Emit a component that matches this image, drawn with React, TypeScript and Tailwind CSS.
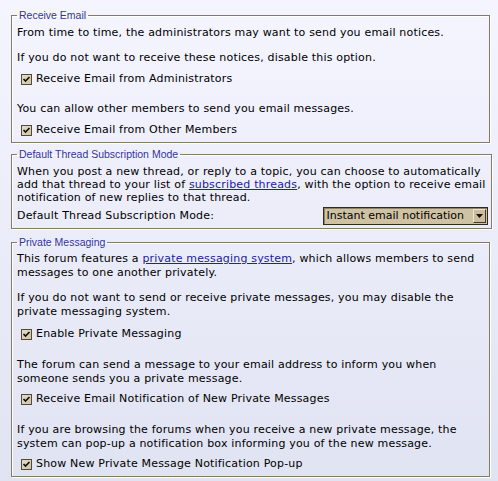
import React from "react";

const body = "font-['DejaVu_Sans',Verdana,sans-serif] text-[11px] tracking-[0.18px] text-black";

function Legend({ children }: { children: React.ReactNode }) {
  return (
    <legend className="px-[2px] text-[10.5px] leading-[12px] tracking-normal text-[#333399] font-['Liberation_Sans',Tahoma,sans-serif]">
      {children}
    </legend>
  );
}

function Box({ children, className = "" }: { children: React.ReactNode; className?: string }) {
  return (
    <fieldset
      className={`border border-[#857b63] px-[5px] pt-[5px] pb-[4px] shadow-[1px_1px_0_#ffffff,inset_1px_1px_0_#ffffff] ${className}`}
    >
      {children}
    </fieldset>
  );
}

function Check({ label, className = "" }: { label: string; className?: string }) {
  return (
    <label className={`flex items-center h-[16px] ${className}`}>
      <span className="ml-[4px] mr-[4px] w-[11px] h-[11px] border border-[#4f4a3a] bg-gradient-to-br from-[#e4dcc6] to-[#cfc4a6] flex items-center justify-center">
        <svg viewBox="0 0 9 9" className="w-[9px] h-[9px]">
          <path d="M1.5 4 L3.5 6 L7.5 2" stroke="#111" strokeWidth="1.7" fill="none" />
        </svg>
      </span>
      {label}
    </label>
  );
}

function Link({ children }: { children: React.ReactNode }) {
  return <a className="text-[#22229c] underline">{children}</a>;
}

export default function App() {
  return (
    <div className={`min-h-[481px] w-[498px] bg-gradient-to-b from-[#f5f5ff] to-[#e0e3f2] pl-[11px] pr-[8px] pt-[9px] ${body}`}>
      <Box>
        <Legend>Receive Email</Legend>
        <p className="leading-[14px]">From time to time, the administrators may want to send you email notices.</p>
        <p className="leading-[14px] mt-[11px]">If you do not want to receive these notices, disable this option.</p>
        <Check label="Receive Email from Administrators" className="mt-[6px]" />
        <p className="leading-[14px] mt-[15px]">You can allow other members to send you email messages.</p>
        <Check label="Receive Email from Other Members" className="mt-[6px]" />
      </Box>

      <Box className="mt-[5px] !pb-[3px]">
        <Legend>Default Thread Subscription Mode</Legend>
        <p className="leading-[13px] whitespace-nowrap">
          When you post a new thread, or reply to a topic, you can choose to automatically
          <br />
          add that thread to your list of <Link>subscribed threads</Link>, with the option to receive email
          <br />
          notification of new replies to that thread.
        </p>
        <div className="flex items-center justify-between mt-[3px] -mr-[2px]">
          <span>Default Thread Subscription Mode:</span>
          <div className="flex items-center w-[165px] h-[18px] border border-[#2e2b22] bg-[#cfc2a3] pl-[3px] pr-[1px] shadow-[inset_1px_1px_0_#8d826a]">
            <span className="leading-[14px] whitespace-nowrap tracking-normal">Instant email notification</span>
            <span className="ml-auto w-[13px] h-[14px] bg-[#cbbd9d] border border-t-[#eee6d2] border-l-[#eee6d2] border-r-[#3d382b] border-b-[#3d382b] flex items-center justify-center">
              <svg viewBox="0 0 7 4" className="w-[7px] h-[4px]">
                <path d="M0 0 H7 L3.5 4 Z" fill="#111" />
              </svg>
            </span>
          </div>
        </div>
      </Box>

      <Box className="mt-[7px] !pt-[4px]">
        <Legend>Private Messaging</Legend>
        <p className="leading-[14px] whitespace-nowrap">
          This forum features a <Link>private messaging system</Link>, which allows members to send
          <br />
          messages to one another privately.
        </p>
        <p className="leading-[14px] mt-[11px] whitespace-nowrap">
          If you do not want to send or receive private messages, you may disable the
          <br />
          private messaging system.
        </p>
        <Check label="Enable Private Messaging" className="mt-[7px]" />
        <p className="leading-[14px] mt-[16px] whitespace-nowrap">
          The forum can send a message to your email address to inform you when
          <br />
          someone sends you a private message.
        </p>
        <Check label="Receive Email Notification of New Private Messages" className="mt-[5px]" />
        <p className="leading-[14px] mt-[16px] whitespace-nowrap">
          If you are browsing the forums when you receive a new private message, the
          <br />
          system can pop-up a notification box informing you of the new message.
        </p>
        <Check label="Show New Private Message Notification Pop-up" className="mt-[5px]" />
      </Box>
    </div>
  );
}
